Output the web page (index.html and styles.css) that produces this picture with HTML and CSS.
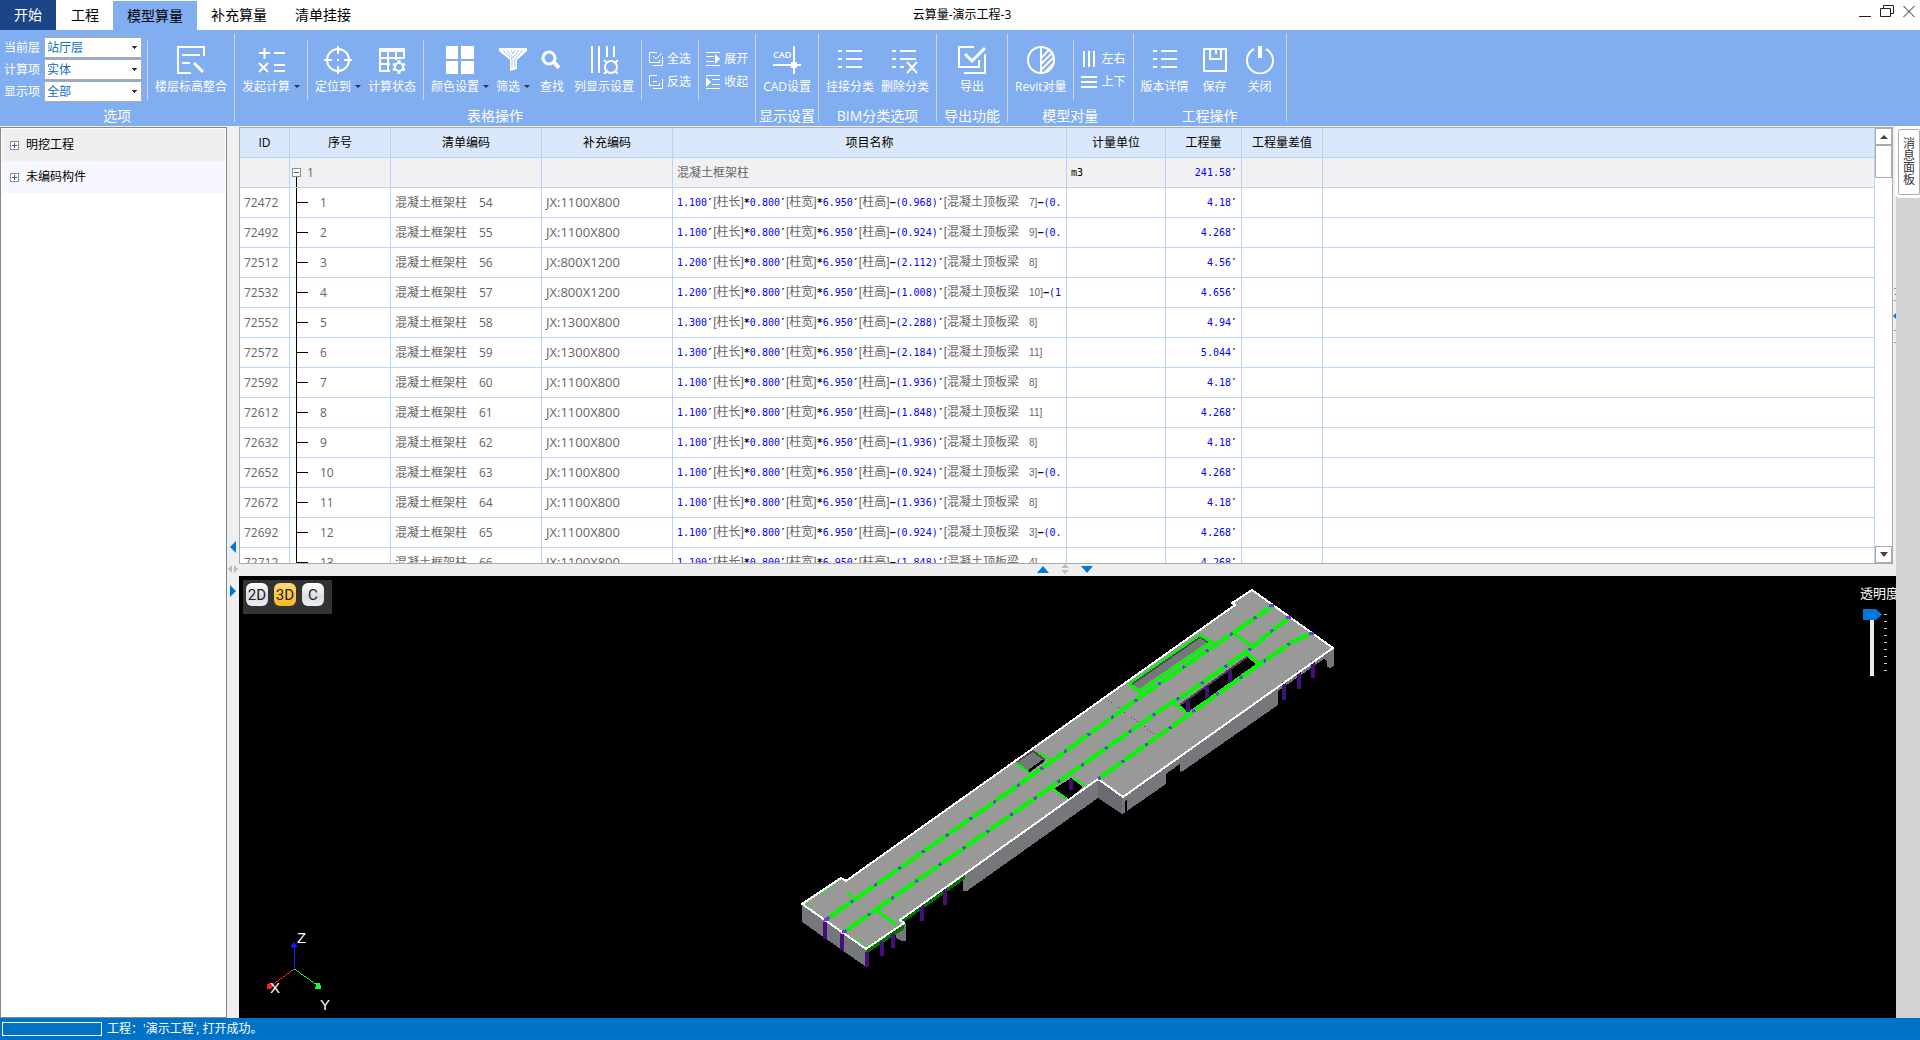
FILE: index.html
```html
<!DOCTYPE html>
<html lang="zh-CN">
<head>
  <meta charset="UTF-8">
  <title>云算量-演示工程-3</title>
  <link rel="stylesheet" href="styles.css">
</head>
<body>

  <header class="titlebar">
    <nav class="tabs">
      <button class="tab start">开始</button>
      <button class="tab">工程</button>
      <button class="tab active">模型算量</button>
      <button class="tab">补充算量</button>
      <button class="tab">清单挂接</button>
    </nav>
    <h1>云算量-演示工程-3</h1>
    <div class="window-buttons">
      <button aria-label="最小化"><svg width="14" height="14"><path d="M1 12.5h12"/></svg></button>
      <button aria-label="还原"><svg width="14" height="14"><path d="M.5 4.500h10v8h-10zM3.500 4v-2.500h10v8h-3"/></svg></button>
      <button aria-label="关闭"><svg width="14" height="14"><path d="M1.500 2l11 11M12.500 2l-11 11"/></svg></button>
    </div>
  </header>

  <div class="ribbon">
    <section class="group">
      <div class="tools">
        <div class="fields">
          <label for="floor">当前层</label>
          <select id="floor"><option>站厅层</option></select>
          <label for="calc">计算项</label>
          <select id="calc"><option>实体</option></select>
          <label for="show">显示项</label>
          <select id="show"><option>全部</option></select>
        </div>
        <div class="set">
          <button class="tool">
            <svg width="28" height="28"><path d="M27 10V1H1v26h13M5 9h18M5 17h8"/><path d="M17 17l9 9" stroke-width="3"/></svg>
            <span>楼层标高整合</span>
          </button>
        </div>
      </div>
      <h2>选项</h2>
    </section>

    <section class="group">
      <div class="tools">
        <div class="set">
          <button class="tool">
            <svg width="28" height="28"><path d="M2 7h11M7.500 2v11M17 7h11M2 17l9 9M11 17l-9 9M17 19h11M17 25h11"/></svg>
            <span class="drop">发起计算</span>
          </button>
        </div>
        <div class="set">
          <button class="tool">
            <svg width="28" height="28"><circle cx="14" cy="14" r="11"/><path d="M14 0v8M14 20v8M0 14h8M20 14h8M13 14h2"/></svg>
            <span class="drop">定位到</span>
          </button>
          <button class="tool">
            <svg width="28" height="28"><path d="M1 4h26" stroke-width="4"/><path d="M2 4v21h10M26 4v9M2 12h24M2 18h10M10 6v19M18 6v8"/><circle cx="21" cy="21" r="4"/><path d="M21 14v3M21 25v3M15 18l2 1M25 23l2 1M15 24l2-1M25 19l2-1" stroke-width="3"/></svg>
            <span>计算状态</span>
          </button>
        </div>
        <div class="set">
          <button class="tool">
            <svg width="28" height="28"><path class="solid" d="M0 0h12v13H0zM15 0h13v13H15zM0 15h12v13H0zM15 15h13v13H15z"/></svg>
            <span class="drop">颜色设置</span>
          </button>
          <button class="tool">
            <svg width="28" height="28"><path class="solid" d="M0 2h28v3l-10 9v9l-7 2V14L0 5z"/><path class="shade" d="M4 4l9 9v9M8 4l6 8 6-8M24 4l-8 9v8M12 4l2 4 2-4"/></svg>
            <span class="drop">筛选</span>
          </button>
          <button class="tool narrow">
            <svg width="28" height="28"><circle cx="11" cy="12" r="6" stroke-width="3"/><path d="M16 16l5 6" stroke-width="4"/></svg>
            <span>查找</span>
          </button>
          <button class="tool">
            <svg width="28" height="28"><path d="M2 0v27M9 0v27M17 0v11M24 0v11"/><circle cx="21" cy="21" r="6" stroke-width="1"/><path d="M14 14l3 3M28 14l-3 3M14 28l3-3M28 28l-3-3"/></svg>
            <span>列显示设置</span>
          </button>
        </div>
        <div class="set stack">
          <button class="mini"><svg width="14" height="14"><path d="M8 .5H.5v10h10V8M13.500 4v9.500H4M4 4l3 3 6-6"/></svg>全选</button>
          <button class="mini"><svg width="14" height="14"><path d="M8 .5H.5v10h10V8M13.500 4v9.500H4M4 6.500h4"/></svg>反选</button>
        </div>
        <div class="set stack">
          <button class="mini"><svg width="14" height="14"><path d="M0 .5h14M0 4.500h8M0 9.500h8M0 13.500h14"/><path class="solid" d="M9 2l5 5-5 5z"/></svg>展开</button>
          <button class="mini"><svg width="14" height="14"><path d="M0 .5h14M6 4.500h8M6 9.500h8M0 13.500h14"/><path class="solid" d="M0 2l5 5-5 5z"/></svg>收起</button>
        </div>
      </div>
      <h2>表格操作</h2>
    </section>

    <section class="group">
      <div class="tools">
        <div class="set">
          <button class="tool">
            <svg width="28" height="28"><text x="0" y="12">CAD</text><path d="M0 19h28M21 0v28"/><path class="solid" d="M18 16h6v6h-6z"/></svg>
            <span>CAD设置</span>
          </button>
        </div>
      </div>
      <h2>显示设置</h2>
    </section>

    <section class="group">
      <div class="tools">
        <div class="set">
          <button class="tool">
            <svg width="28" height="28"><path d="M2 5h4M10 5h16M2 13h4M10 13h16M2 21h4M10 21h16"/></svg>
            <span>挂接分类</span>
          </button>
          <button class="tool">
            <svg width="28" height="28"><path d="M1 5h4M9 5h16M1 13h4M9 13h16M1 21h4M9 21h4M16 16l10 11M26 16L16 27"/></svg>
            <span>删除分类</span>
          </button>
        </div>
      </div>
      <h2>BIM分类选项</h2>
    </section>

    <section class="group">
      <div class="tools">
        <div class="set">
          <button class="tool wide">
            <svg width="28" height="28"><path d="M16 1H1v20h20v-7M27 8v19H6"/><path d="M7 8l7 7L27 2" stroke-width="3"/></svg>
            <span>导出</span>
          </button>
        </div>
      </div>
      <h2>导出功能</h2>
    </section>

    <section class="group">
      <div class="tools">
        <div class="set">
          <button class="tool">
            <svg width="28" height="28"><circle cx="14" cy="14" r="13"/><path d="M14 1v26M14 12l9-9M14 18L26 6M14 24l13-13M18 26l9-9"/></svg>
            <span>Revit对量</span>
          </button>
        </div>
        <div class="set stack">
          <button class="mini"><svg width="16" height="16"><path d="M3 0v16M8 0v16M13 0v16"/></svg>左右</button>
          <button class="mini"><svg width="16" height="16"><path d="M0 3h16M0 8h16M0 13h16"/></svg>上下</button>
        </div>
      </div>
      <h2>模型对量</h2>
    </section>

    <section class="group">
      <div class="tools">
        <div class="set">
          <button class="tool">
            <svg width="28" height="28"><path d="M2 5h4M10 5h16M2 13h4M10 13h16M2 21h4M10 21h16"/></svg>
            <span>版本详情</span>
          </button>
          <button class="tool">
            <svg width="28" height="28"><path d="M3 3h22v22H3zM9 3v10h11V3M15 3v5"/></svg>
            <span>保存</span>
          </button>
          <button class="tool">
            <svg width="28" height="28"><path d="M8 3a13 13 0 1 0 12 0"/><path d="M14 0v12" stroke-width="4"/></svg>
            <span>关闭</span>
          </button>
        </div>
      </div>
      <h2>工程操作</h2>
    </section>
  </div>

  <main class="workspace">
    <aside class="tree">
      <ul>
        <li class="selected"><button class="expander" aria-label="展开"></button>明挖工程</li>
        <li><button class="expander" aria-label="展开"></button>未编码构件</li>
      </ul>
    </aside>

    <div class="splitter splitter-v">
      <svg width="8" height="12"><path class="blue" d="M7 0v12L1 6z"/></svg>
      <svg width="10" height="8"><path class="grey" d="M4 0v8L0 4zM6 0v8l4-4z"/></svg>
      <svg width="8" height="12"><path class="blue" d="M1 0v12l6-6z"/></svg>
    </div>

    <div class="center">
      <div class="grid">
        <div class="grid-body">
          <table>
            <colgroup>
              <col class="c-id"><col class="c-seq"><col class="c-code"><col class="c-extra"><col class="c-name">
              <col class="c-unit"><col class="c-qty"><col class="c-diff"><col>
            </colgroup>
            <thead>
              <tr>
                <th>ID</th><th>序号</th><th>清单编码</th><th>补充编码</th><th>项目名称</th>
                <th>计量单位</th><th>工程量</th><th>工程量差值</th><th></th>
              </tr>
            </thead>
            <tbody id="rows">
              <tr class="parent">
                <td></td>
                <td class="root"><button class="expander open" aria-label="收起"></button>1</td>
                <td></td><td></td>
                <td>混凝土框架柱</td>
                <td class="unit">m3</td>
                <td class="qty">241.58<i>′</i></td>
                <td></td><td></td>
              </tr>
            </tbody>
          </table>
        </div>
        <div class="scrollbar">
          <button aria-label="向上"><svg width="8" height="4"><path d="M4 0l4 4H0z"/></svg></button>
          <div class="scroll-thumb"></div>
          <button class="down" aria-label="向下"><svg width="8" height="5"><path d="M0 0h8L4 5z"/></svg></button>
        </div>
      </div>

      <div class="splitter splitter-h">
        <svg width="12" height="7"><path class="blue" d="M0 7h12L6 0z"/></svg>
        <svg width="8" height="10"><path class="grey" d="M0 4h8L4 0zM0 6h8l-4 4z"/></svg>
        <svg width="12" height="7"><path class="blue" d="M0 0h12L6 7z"/></svg>
      </div>

      <div class="viewer">
        <svg class="scene" viewBox="239 576 1657 442" shape-rendering="crispEdges">
          <!-- side walls -->
          <path class="wall" d="M802 904V922L866 967V949z"/>
          <path class="wall" d="M896 926v12l6 3h4v-18z"/>
          <path class="wall" d="M963 874v17h4L1098 798V779z"/>
          <path class="wall-dark" d="M1098 779v19l24 16V796z"/>
          <path class="wall" d="M1122 796v18l3-1v-12l2-1v11L1166 784v-10l14-10v8l3-1L1278 705v-14l46-32 3 2v6l3 1 4-2v-18z"/>
          <path class="beam-dark" d="M866 949L904 923v6L866 954zM900 920L965 874v5L904 922z"/>

          <!-- slab -->
          <path class="slab" d="M802 904L841 878l5 3L1235 605l-3-2L1252 590l81 58L1123 797l-25-18L900 920l4 3L866 949z"/>

          <!-- openings -->
          <path class="pit" d="M1132 684l68-47 8 5-69 47z"/>
          <path class="pit-edge" d="M1132 684l68-47 8 5"/>
          <path class="hole" d="M1180 705l67-48 9 7-68 48z"/>
          <path class="pit-edge" d="M1180 705l67-48"/>
          <path class="pit" d="M1016 762l17-11 12 9-16 12z"/>
          <path class="pit-edge" d="M1016 762l17-11 12 9"/>
          <path class="hole" d="M1027 771l15-11 3 1-15 11z"/>
          <path class="hole" d="M1054 789l17-11 12 9-14 12z"/>
          <path class="seam" d="M1105 698l52 38"/>

          <!-- columns -->
          <path class="column" d="M1188 700v12M1207 687v12M1230 670v12M1071 779v11M825 922v17M842 934v16M867 952v15M882 942v14M893 934v14M922 905v16M945 888v17M1284 682v18M1299 671v18M1313 661v17"/>

          <!-- beams -->
          <g class="beam">
            <path id="beam-a" d="M827 919L1030 777 1143 695 1233 633 1272 606"/>
            <path id="beam-b" d="M844 932L1048 789 1172 702 1188 693 1253 647 1273 630 1289 618"/>
            <path id="beam-c" d="M1098 779L1260 664 1292 642 1312 633"/>
            <path class="cross" d="M1233 633l20 14M1247 654l13 10M1172 702l14 10M1143 695l-14-11M1200 635l15 9M1140 691l70-48M876 910l20 15"/>
          </g>
          <path class="beam cross" d="M1129 684l71-49M1016 763l15 11M1038 752l14 9M1052 788l15 11M1073 778l12 8M846 892l10 7"/>
          <path class="beam thin" d="M820 894l21-15M854 937l14 11M806 904l7 4"/>
          <path class="outline" d="M802 904L841 878l5 3L1235 605l-3-2L1252 590l81 58L1123 797l-25-18L900 920l4 3L866 949z"/>
          <g class="nodes">
            <use href="#beam-a"/><use href="#beam-b"/><use href="#beam-c"/>
          </g>
          <path class="tops" d="M1269 606h5M1286 618h5M1309 634h5M824 920h5M842 932h5"/>

          <!-- axes -->
          <g class="axes">
            <path stroke="#0b1cff" d="M294 969v-22"/>
            <path stroke="#ff1e1e" d="M294 969l-23 17"/>
            <path stroke="#1eff32" d="M294 969l23 16"/>
            <path class="tip-z" d="M290 946l4-4 3 4-1 2h-4z"/>
            <path class="tip-x" d="M267 984l4-1 2 3-2 3h-4z"/>
            <path class="tip-y" d="M316 983h4l1 6h-6z"/>
            <text x="297" y="943">Z</text>
            <text x="270" y="993">X</text>
            <text x="320" y="1010">Y</text>
          </g>
        </svg>

        <div class="view-modes">
          <button>2D</button>
          <button class="on">3D</button>
          <button>C</button>
        </div>

        <div class="opacity">
          <label for="opacity">透明度</label>
          <div class="slider">
            <input type="range" id="opacity" min="0" max="8" value="0">
            <span class="ticks"></span>
          </div>
        </div>
      </div>
    </div>

    <div class="edge">
      <svg width="3" height="62"><path stroke="#999" d="M1 6.500h2M1 18.500h2M1 48.500h2M1 60.500h2"/><path stroke="#0078d7" d="M2 12.500h1"/><path class="blue" d="M3 31v6L0 34z"/></svg>
    </div>

    <aside class="dock">
      <button>消息面板</button>
    </aside>
  </main>

  <footer class="status">
    <div class="progress"></div>
    <span>工程：'演示工程', 打开成功。</span>
  </footer>

  <script>
    // id, number, section, width, deduction, beam no., rest of formula, quantity
    const items = [
      [72472, 54, "1100X800", "1.100", "0.968", 7, "-(0.", "4.18"],
      [72492, 55, "1100X800", "1.100", "0.924", 9, "-(0.", "4.268"],
      [72512, 56, "800X1200", "1.200", "2.112", 8, "", "4.56"],
      [72532, 57, "800X1200", "1.200", "1.008", 10, "-(1", "4.656"],
      [72552, 58, "1300X800", "1.300", "2.288", 8, "", "4.94"],
      [72572, 59, "1300X800", "1.300", "2.184", 11, "", "5.044"],
      [72592, 60, "1100X800", "1.100", "1.936", 8, "", "4.18"],
      [72612, 61, "1100X800", "1.100", "1.848", 11, "", "4.268"],
      [72632, 62, "1100X800", "1.100", "1.936", 8, "", "4.18"],
      [72652, 63, "1100X800", "1.100", "0.924", 3, "-(0.", "4.268"],
      [72672, 64, "1100X800", "1.100", "1.936", 8, "", "4.18"],
      [72692, 65, "1100X800", "1.100", "0.924", 3, "-(0.", "4.268"],
      [72712, 66, "1100X800", "1.100", "1.848", 4, "", "4.268"]
    ];

    const tick = "<i>′</i>";
    const minusSign = "<i>−</i>";

    function formula(width, minus, beam, rest) {
      return `<b>${width}${tick}</b>[柱长]<b><i>*</i>0.800${tick}</b>[柱宽]<b><i>*</i>6.950${tick}</b>[柱高]` +
        `<b>${minusSign}(${minus})${tick}</b>[混凝土顶板梁<small>　${beam}]</small><b>${rest.replace("-", minusSign)}</b>`;
    }

    const rows = document.getElementById("rows");
    items.forEach(([id, no, section, width, minus, beam, rest, qty], index) => {
      const tr = document.createElement("tr");
      tr.innerHTML = `
        <td>${id}</td>
        <td class="branch">${index + 1}</td>
        <td>混凝土框架柱　${no}</td>
        <td class="extra">JX:${section}</td>
        <td class="formula">${formula(width, minus, beam, rest)}</td>
        <td></td>
        <td class="qty">${qty}${tick}</td>
        <td></td><td></td>
      `;
      rows.appendChild(tr);
    });
  </script>
</body>
</html>
```
FILE: styles.css
```css
* {
  box-sizing: border-box;
}
body {
  margin: 0;
  height: 100vh;
  display: flex;
  flex-direction: column;
  overflow: hidden;
  font-family: "Open Sans", "Noto Sans CJK SC", sans-serif;
  font-size: 12px;
  line-height: 16px;
  color: #000;
  background: #fff;
}
button, select, input {
  font: inherit;
  color: inherit;
}
button {
  border: none;
  padding: 0;
  background: none;
}
h1, h2 {
  margin: 0;
  font-weight: normal;
}
svg {
  display: block;
}
.blue {
  fill: #0078d7;
}
.grey {
  fill: #bcbcbc;
}

/* title bar */
.titlebar {
  flex: none;
  height: 30px;
  display: grid;
  grid-template-columns: 1fr auto 1fr;
  align-items: center;
}
.tabs {
  display: flex;
  align-self: stretch;
}
.tab {
  padding: 0 14px;
  font-size: 14px;
}
.tab.start {
  margin-right: 1px;
  background: #1b4587;
  color: #fff;
}
.tab.active {
  margin-top: 1px;
  background: #81adf1;
}
.titlebar h1 {
  padding-left: 4px;
  font-size: 12px;
}
.window-buttons {
  display: flex;
  justify-content: flex-end;
  gap: 8px;
  padding: 0 4px 8px 0;
}
.window-buttons path {
  fill: none;
  stroke: #222;
}

/* ribbon */
.ribbon {
  flex: none;
  height: 96px;
  display: flex;
  background: #81adf1;
  color: #fff;
}
.group {
  display: flex;
  flex-direction: column;
  position: relative;
  padding-right: 1px;
}
.group::after {
  content: "";
  position: absolute;
  right: 0;
  top: 4px;
  bottom: 4px;
  width: 1px;
  background: #d2d6dc;
}
.group h2 {
  font-size: 14px;
  text-align: center;
}
.tools {
  display: flex;
  justify-content: center;
  height: 60px;
  margin: 10px 0 8px;
}
.set {
  display: flex;
  gap: 7px;
  padding: 0 7px;
}
.set + .set, .fields + .set {
  border-left: 1px solid #d2d6dc;
}
.fields {
  display: grid;
  grid-template-columns: 40px 98px;
  align-content: start;
  align-items: center;
  row-gap: 1px;
  margin-top: -3px;
  padding: 0 5px 0 4px;
}
.fields select {
  height: 21px;
  padding: 0 2px;
  border: 1px solid #ababab;
  border-radius: 0;
  color: #0b6cbd;
  appearance: none;
  background-color: #fff;
  background-image: linear-gradient(#333, #333), linear-gradient(#333, #333), linear-gradient(#333, #333);
  background-repeat: no-repeat;
  background-position: right 4px top 8px, right 5px top 9px, right 6px top 10px;
  background-size: 5px 1px, 3px 1px, 1px 1px;
}
.tool {
  display: flex;
  flex-direction: column;
  align-items: center;
  gap: 5px;
  min-width: 38px;
  padding-top: 6px;
  white-space: nowrap;
}
.tool.narrow, .tool:has(.drop) {
  min-width: 30px;
}
.tool.wide {
  min-width: 56px;
}
.drop::after {
  content: "";
  display: inline-block;
  margin-left: 4px;
  vertical-align: 3px;
  border: 3px solid transparent;
  border-top-color: #333;
  border-bottom: none;
}
.ribbon path, .ribbon circle {
  fill: none;
  stroke: #fff;
  stroke-width: 2;
}
.ribbon path[stroke-width="3"], .ribbon circle[stroke-width="3"] {
  stroke-width: 3;
}
.ribbon path[stroke-width="4"] {
  stroke-width: 4;
}
.ribbon .mini path {
  stroke-width: 1;
}
.ribbon .mini svg[width="16"] path {
  stroke-width: 2;
}
.ribbon path.solid {
  fill: #fff;
  stroke: none;
}
.ribbon path.shade {
  stroke: #a9c7f5;
  stroke-width: 1;
}
.ribbon text {
  fill: #fff;
  font-size: 9px;
  font-weight: 600;
}
.stack {
  flex-direction: column;
  justify-content: center;
}
.mini {
  display: flex;
  align-items: center;
  gap: 4px;
  white-space: nowrap;
}

/* workspace */
.workspace {
  flex: 1;
  min-height: 0;
  display: flex;
  padding-top: 1px;
  background: #efefef;
}
.tree {
  width: 227px;
  padding: 1px;
  border: 1px solid #828790;
  background: #fff;
}
.tree ul {
  list-style: none;
  margin: 0;
  padding: 0;
}
.tree li {
  display: flex;
  align-items: center;
  gap: 7px;
  height: 32px;
  padding-left: 8px;
  background: #f7f8ff;
}
.tree li.selected {
  background: #efefef;
}
.expander {
  flex: none;
  width: 9px;
  height: 9px;
  border: 1px solid #8f8f8f;
  background:
    linear-gradient(#3b5ca8, #3b5ca8) center / 5px 1px no-repeat,
    linear-gradient(#3b5ca8, #3b5ca8) center / 1px 5px no-repeat,
    #fff;
}
.expander.open {
  background: linear-gradient(#3b5ca8, #3b5ca8) center / 5px 1px no-repeat, #fff;
}
.splitter {
  display: flex;
  align-items: center;
  justify-content: center;
}
.splitter-v {
  width: 12px;
  flex-direction: column;
  gap: 12px;
  padding-bottom: 8px;
}
.splitter-h {
  gap: 12px;
  padding: 0 6px 2px 0;
}
.center {
  flex: 1;
  min-width: 0;
  display: grid;
  grid-template-rows: 180fr 12px 182fr;
}

/* quantity table */
.grid {
  min-height: 0;
  display: flex;
  margin-right: 3px;
  border: 1px solid #ababab;
  background: #fff;
}
.grid-body {
  flex: 1;
  min-width: 0;
  overflow: hidden;
}
table {
  width: 100%;
  table-layout: fixed;
  border-collapse: separate;
  border-spacing: 0;
}
.c-id { width: 50px; }
.c-seq { width: 101px; }
.c-code { width: 151px; }
.c-extra { width: 131px; }
.c-name { width: 394px; }
.c-unit { width: 99px; }
.c-qty { width: 76px; }
.c-diff { width: 81px; }
th, td {
  height: 30px;
  padding: 0 4px;
  border-right: 1px solid #bad4f9;
  border-bottom: 1px solid #bad4f9;
  white-space: nowrap;
  overflow: hidden;
}
th {
  font-weight: normal;
  background: #dae8fc;
}
td {
  color: #666;
}
.parent td {
  background: #f1f1f1;
}
.root {
  position: relative;
  padding-left: 17px;
}
.root .expander {
  position: absolute;
  left: 2px;
  top: 10px;
}
.root::after {
  content: "";
  position: absolute;
  left: 6px;
  top: 19px;
  bottom: -1px;
  width: 1px;
  background: #000;
}
.branch {
  position: relative;
  padding-left: 30px;
  overflow: visible;
}
.branch::before {
  content: "";
  position: absolute;
  left: 6px;
  top: 0;
  bottom: -1px;
  width: 1px;
  background: #000;
}
.branch::after {
  content: "";
  position: absolute;
  left: 7px;
  top: 14px;
  width: 11px;
  height: 1px;
  background: #000;
}
.extra {
  padding-bottom: 1px;
  font-size: 13px;
}
.formula {
  font-family: "Liberation Sans", "Noto Sans CJK SC", sans-serif;
}
.formula b, .qty, .unit {
  font-family: "DejaVu Sans Mono", monospace;
  font-size: 10px;
  font-weight: normal;
  color: #00f;
}
.formula small {
  font-size: 10px;
}
.formula i, .qty i, .unit {
  font-style: normal;
  color: #000;
}
.formula i, .qty i {
  font-weight: bold;
}
.qty {
  text-align: right;
}
.scrollbar {
  width: 17px;
  display: flex;
  flex-direction: column;
}
.scrollbar button {
  display: flex;
  align-items: center;
  justify-content: center;
  height: 17px;
  border: 1px solid #ababab;
}
.scrollbar path {
  fill: #444;
}
.scrollbar .down {
  margin-top: auto;
}
.scroll-thumb {
  height: 33px;
  border: 1px solid #ababab;
}

/* model view */
.viewer {
  position: relative;
  min-height: 0;
  overflow: hidden;
  background: #000;
  color: #fff;
}
.scene {
  width: 100%;
  height: 100%;
}
.scene path, .scene use {
  fill: none;
}
.scene .slab { fill: #999997; }
.scene .wall { fill: #75777b; }
.scene .wall-dark { fill: #696b71; }
.scene .beam-dark { fill: #007300; }
.scene .pit { fill: #75777b; }
.scene .hole { fill: #000; }
.scene .tip-z { fill: #0b1cff; }
.scene .tip-x { fill: #ff1e1e; }
.scene .tip-y { fill: #1eff32; }
.pit-edge {
  stroke: #4a4a4a;
  stroke-width: 2;
}
.seam {
  stroke: #444;
  stroke-dasharray: 1 3;
}
.column {
  stroke: #431078;
  stroke-width: 4;
}
.beam {
  stroke: #00f800;
  stroke-width: 4;
}
.cross {
  stroke-width: 3;
}
.beam.cross {
  stroke-width: 2;
}
.beam.thin {
  stroke-width: 1;
}
.nodes {
  stroke: #8527ff;
  stroke-width: 3;
  stroke-dasharray: 3 26;
}
.outline {
  stroke: #fff;
  stroke-width: 2;
}
.tops {
  stroke: #8527ff;
  stroke-width: 3;
}
.axes text {
  fill: #fff;
  font-family: "Liberation Sans", sans-serif;
  font-size: 15px;
}
.view-modes {
  position: absolute;
  left: 4px;
  top: 4px;
  display: flex;
  gap: 6px;
  padding: 3px 8px 8px 3px;
  background: #333;
}
.view-modes button {
  width: 22px;
  height: 23px;
  border-radius: 6px;
  background: linear-gradient(#fff, #d9dde2 60%, #eef0f3);
  color: #222;
  font-family: Roboto, sans-serif;
  font-size: 15px;
}
.view-modes .on {
  background: linear-gradient(#ffd978, #fbb81c);
}
.opacity {
  position: absolute;
  right: -4px;
  top: 9px;
  width: 40px;
}
.opacity label {
  display: block;
  font-size: 13px;
  white-space: nowrap;
}
.slider {
  display: flex;
  gap: 2px;
  margin: 8px 0 0 3px;
}
.slider input {
  appearance: none;
  writing-mode: vertical-lr;
  width: 19px;
  height: 67px;
  margin: 0;
  background: linear-gradient(#e7eaea, #e7eaea) 7px 0 / 4px 100% no-repeat;
}
.slider input::-webkit-slider-thumb {
  appearance: none;
  width: 19px;
  height: 11px;
  background: #0078d7;
  clip-path: polygon(0 0, 68% 0, 100% 50%, 68% 100%, 0 100%);
}
.ticks {
  width: 3px;
  height: 58px;
  margin-top: 5px;
  background: repeating-linear-gradient(#ccc 0 1px, transparent 1px 7px);
}

/* right side */
.edge {
  width: 0;
  position: relative;
}
.edge svg {
  position: absolute;
  right: 0;
  top: 155px;
}
.dock {
  width: 24px;
  padding-top: 2px;
  background: linear-gradient(#fff, #fff) top / 100% 3px no-repeat, #d3d3d3;
}
.dock button {
  display: block;
  width: 22px;
  height: 66px;
  margin-left: 2px;
  padding: 0 4px;
  border: 1px solid #ababab;
  border-radius: 2px;
  outline: 3px solid #fff;
  background: #fff;
  line-height: 12px;
  color: #333;
}

/* status bar */
.status {
  flex: none;
  display: flex;
  align-items: center;
  gap: 5px;
  height: 22px;
  padding-left: 2px;
  background: #0072c6;
  color: #fff;
}
.progress {
  width: 100px;
  height: 14px;
  border: 1px solid #fff;
}
```
